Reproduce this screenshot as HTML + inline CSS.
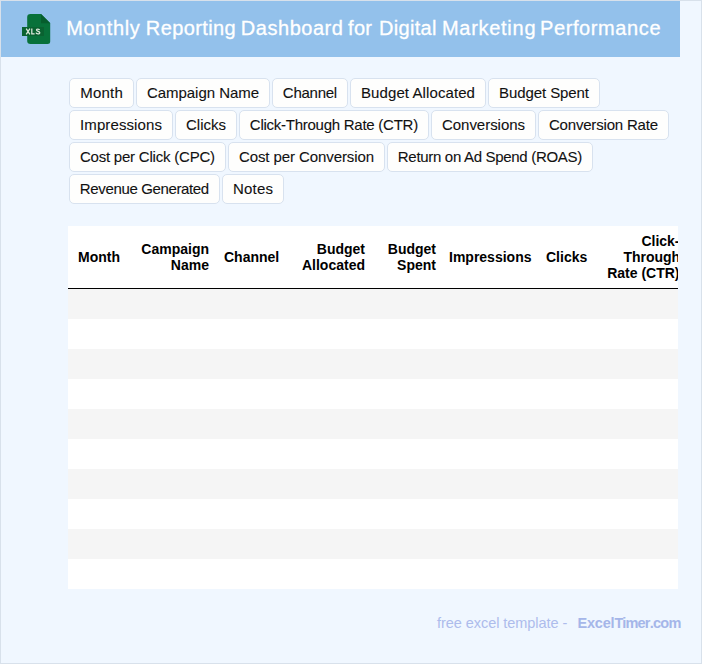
<!DOCTYPE html>
<html><head><meta charset="utf-8"><title>Monthly Reporting Dashboard</title>
<style>
html,body{margin:0;padding:0;}
body{width:702px;height:664px;position:relative;overflow:hidden;background:#f0f7ff;font-family:"Liberation Sans",sans-serif;}
.frame{position:absolute;left:0;top:0;width:700px;height:662px;border:1px solid #d8e1eb;z-index:10;pointer-events:none}
.hdr{position:absolute;left:1px;top:1px;width:679px;height:56px;background:#93c1eb;}
.title{position:absolute;top:15px;font-size:20px;line-height:24px;color:#fff;white-space:nowrap;-webkit-text-stroke:0.3px #fff;}
.tag{position:absolute;height:30px;box-sizing:border-box;border:1px solid #d8e2ef;border-radius:5px;background:#fefefd;font-size:15px;line-height:27px;text-align:center;color:#111;-webkit-text-stroke:0.1px #111;white-space:nowrap;}
.tbl{position:absolute;left:68px;top:226px;width:610px;height:363px;background:#fff;overflow:hidden;}
.th{position:absolute;font-weight:bold;font-size:14px;line-height:16px;color:#000;white-space:nowrap;}
.r{text-align:right}
.foot{position:absolute;top:614px;font-size:14.5px;line-height:18px;white-space:nowrap;color:#adbcec;}
</style></head><body>
<div class="hdr">
<svg style="position:absolute;left:20px;top:12px" width="32" height="33" viewBox="0 0 32 33">
<path d="M9.5 1 H20 L29.2 10 V28.5 Q29.2 31 26.5 31 H9.5 Q6.2 31 6.2 28 V4 Q6.2 1 9.5 1 Z" fill="#08713a"/>
<path d="M20 1 L29.2 10.2 H20 Z" fill="#065d2d"/>
<rect x="1" y="14" width="22" height="9" fill="#0a6231"/>
<g fill="none" stroke="#dde8db" stroke-width="1.25">
<path d="M5.2 15.6 L8.9 21.3 M8.9 15.6 L5.2 21.3"/>
<path d="M10.8 15.5 V20.75 H13.6"/>
<path d="M18.5 17.1 C18.4 15.7 15.5 15.6 15.5 17.1 C15.5 18.7 18.8 18.1 18.8 19.8 C18.8 21.4 15.2 21.3 15.0 19.7"/>
</g>
</svg>
<span class="title" style="left:65.15px;letter-spacing:0.584px">Monthly</span><span class="title" style="left:144.85px;letter-spacing:0.395px">Reporting</span><span class="title" style="left:239.85px;letter-spacing:0.523px">Dashboard</span><span class="title" style="left:347.11px;letter-spacing:0.243px">for</span><span class="title" style="left:377.88px;letter-spacing:0.332px">Digital</span><span class="title" style="left:440.94px;letter-spacing:0.719px">Marketing</span><span class="title" style="left:539.05px;letter-spacing:0.597px">Performance</span>
</div>
<div class="tag" style="left:69px;top:78px;width:65px;"><span style="letter-spacing:0.260px;margin-right:-0.260px">Month</span></div>
<div class="tag" style="left:136px;top:78px;width:134px;"><span style="letter-spacing:-0.043px;margin-right:0.043px">Campaign Name</span></div>
<div class="tag" style="left:272px;top:78px;width:76px;"><span style="letter-spacing:-0.270px;margin-right:0.270px">Channel</span></div>
<div class="tag" style="left:350px;top:78px;width:136px;"><span style="letter-spacing:0.088px;margin-right:-0.088px">Budget Allocated</span></div>
<div class="tag" style="left:488px;top:78px;width:112px;"><span style="letter-spacing:-0.077px;margin-right:0.077px">Budget Spent</span></div>
<div class="tag" style="left:69px;top:110px;width:104px;"><span style="letter-spacing:0.104px;margin-right:-0.104px">Impressions</span></div>
<div class="tag" style="left:175px;top:110px;width:62px;"><span style="letter-spacing:0.000px;margin-right:-0.000px">Clicks</span></div>
<div class="tag" style="left:239px;top:110px;width:190px;"><span style="letter-spacing:-0.258px;margin-right:0.258px">Click-Through Rate (CTR)</span></div>
<div class="tag" style="left:431px;top:110px;width:105px;"><span style="letter-spacing:-0.035px;margin-right:0.035px">Conversions</span></div>
<div class="tag" style="left:538px;top:110px;width:131px;"><span style="letter-spacing:-0.182px;margin-right:0.182px">Conversion Rate</span></div>
<div class="tag" style="left:69px;top:142px;width:157px;"><span style="letter-spacing:-0.209px;margin-right:0.209px">Cost per Click (CPC)</span></div>
<div class="tag" style="left:228px;top:142px;width:157px;"><span style="letter-spacing:-0.091px;margin-right:0.091px">Cost per Conversion</span></div>
<div class="tag" style="left:387px;top:142px;width:206px;"><span style="letter-spacing:-0.311px;margin-right:0.311px">Return on Ad Spend (ROAS)</span></div>
<div class="tag" style="left:69px;top:174px;width:151px;"><span style="letter-spacing:-0.359px;margin-right:0.359px">Revenue Generated</span></div>
<div class="tag" style="left:222px;top:174px;width:62px;"><span style="letter-spacing:0.162px;margin-right:-0.162px">Notes</span></div>

<div class="tbl">
<div style="position:absolute;left:0;top:63px;width:610px;height:30px;background:#f5f5f5"></div>
<div style="position:absolute;left:0;top:93px;width:610px;height:30px;background:#ffffff"></div>
<div style="position:absolute;left:0;top:123px;width:610px;height:30px;background:#f5f5f5"></div>
<div style="position:absolute;left:0;top:153px;width:610px;height:30px;background:#ffffff"></div>
<div style="position:absolute;left:0;top:183px;width:610px;height:30px;background:#f5f5f5"></div>
<div style="position:absolute;left:0;top:213px;width:610px;height:30px;background:#ffffff"></div>
<div style="position:absolute;left:0;top:243px;width:610px;height:30px;background:#f5f5f5"></div>
<div style="position:absolute;left:0;top:273px;width:610px;height:30px;background:#ffffff"></div>
<div style="position:absolute;left:0;top:303px;width:610px;height:30px;background:#f5f5f5"></div>
<div style="position:absolute;left:0;top:333px;width:610px;height:30px;background:#ffffff"></div>

<div style="position:absolute;left:0;top:62px;width:610px;height:1px;background:#000"></div>
<div class="th" style="left:10px;top:23px">Month</div>
<div class="th r" style="right:469px;top:15px">Campaign<br>Name</div>
<div class="th" style="left:156px;top:23px">Channel</div>
<div class="th r" style="right:313px;top:15px">Budget<br>Allocated</div>
<div class="th r" style="right:242px;top:15px">Budget<br>Spent</div>
<div class="th" style="left:381px;top:23px">Impressions</div>
<div class="th" style="left:478px;top:23px">Clicks</div>
<div class="th" style="left:573.4px;top:7px">Click-</div>
<div class="th" style="left:555.4px;top:23px">Through</div>
<div class="th" style="left:539.2px;top:39px">Rate (CTR)</div>
</div>
<div class="foot" style="left:437px;letter-spacing:-0.055px">free excel template -</div>
<div class="foot" style="left:577.5px;font-weight:bold;color:#a5b6e9;"><span style="letter-spacing:-0.2px">Excel</span><span style="letter-spacing:-0.8px">Timer</span><span style="letter-spacing:-0.7px">.com</span></div>
<div class="frame"></div>
</body></html>
